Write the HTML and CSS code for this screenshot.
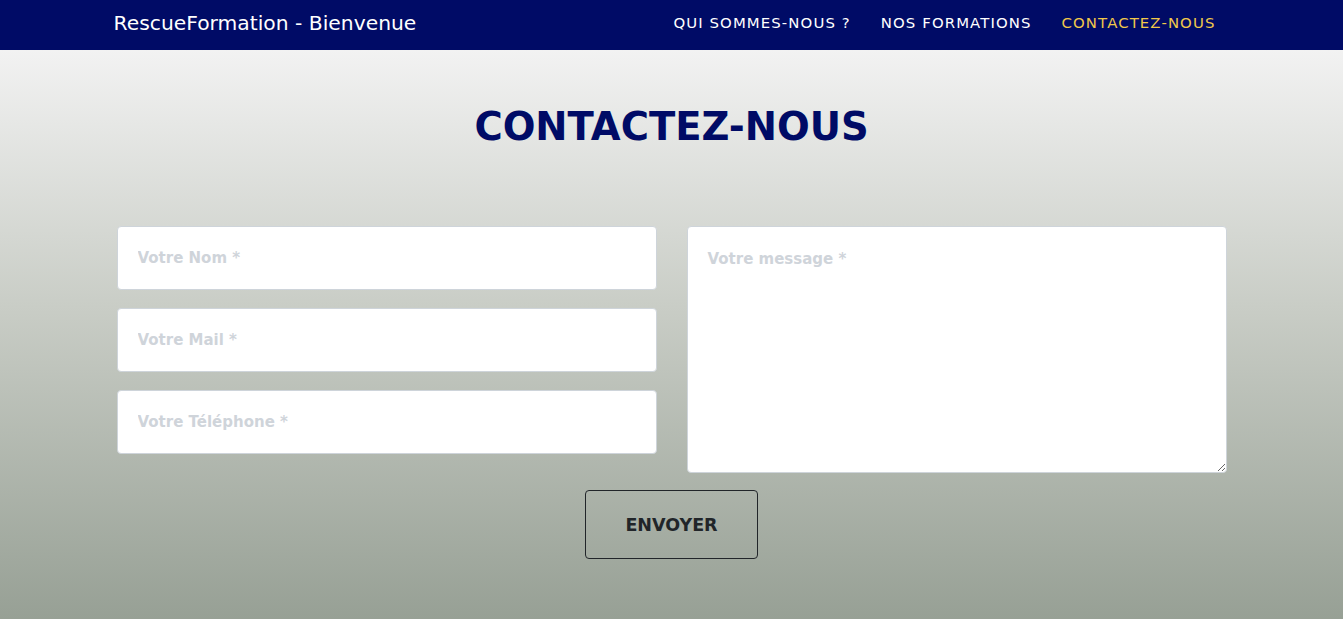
FILE: index.html
```html
<!DOCTYPE html>
<html lang="fr">
<head>
<meta charset="utf-8">
<title>RescueFormation - Contact</title>
<link rel="stylesheet" href="styles.css">
</head>
<body>
<header class="navbar">
  <div class="container nav-inner">
    <a class="brand" href="#">RescueFormation - Bienvenue</a>
    <nav class="nav-links">
      <a href="#">Qui sommes-nous ?</a>
      <a href="#">Nos formations</a>
      <a href="#" class="active">Contactez-nous</a>
    </nav>
  </div>
</header>
<main class="contact">
  <div class="container">
    <h1 class="title">Contactez-nous</h1>
    <form class="form">
      <div class="form-row">
        <div class="col col-fields">
          <input class="field" type="text" placeholder="Votre Nom *">
          <input class="field" type="email" placeholder="Votre Mail *">
          <input class="field" type="tel" placeholder="Votre Téléphone *">
        </div>
        <div class="col">
          <textarea class="field area" placeholder="Votre message *"></textarea>
        </div>
      </div>
      <div class="actions">
        <button class="btn" type="button">Envoyer</button>
      </div>
    </form>
  </div>
</main>
</body>
</html>
```

FILE: styles.css
```css
* { box-sizing: border-box; }
html, body { margin: 0; padding: 0; }
body {
  font-family: "DejaVu Sans", "Open Sans", sans-serif;
  background: #97a095;
}
.container {
  width: 1110px;
  margin: 0 auto;
}
.navbar {
  background: #000b66;
  height: 50px;
}
.nav-inner {
  height: 50px;
  display: flex;
  align-items: center;
  justify-content: space-between;
}
.brand {
  margin-left: -3px;
  color: #ffffff;
  text-decoration: none;
  font-size: 20.3px;
  margin-top: -4px;
}
.nav-links {
  display: flex;
  gap: 30px;
  margin-right: 11px;
  margin-top: -5px;
}
.nav-links a {
  color: #ffffff;
  text-decoration: none;
  text-transform: uppercase;
  font-size: 14.9px;
  letter-spacing: 1.1px;
}
.nav-links a.active { color: #f0c84a; }
.contact {
  min-height: 569px;
  background: linear-gradient(180deg, #f2f2f2 0%, #c9cdc6 45%, #97a095 100%);
  padding-top: 52px;
  padding-bottom: 60px;
}
.title {
  margin: 0;
  text-align: center;
  color: #000b66;
  font-size: 38.5px;
  font-weight: 700;
  text-transform: uppercase;
  line-height: 50px;
}
.form { margin-top: 74px; }
.form-row {
  display: flex;
  gap: 30px;
}
.col { flex: 1; display: flex; }
.col-fields {
  flex-direction: column;
  gap: 18px;
}
.field {
  width: 100%;
  height: 64px;
  border: 1px solid #ced4da;
  border-radius: 4px;
  background: #fff;
  padding: 0 20px;
  font-family: inherit;
  font-weight: 700;
  font-size: 15px;
  color: #495057;
}
.field::placeholder { color: #cfd4da; opacity: 1; }
.area {
  height: 247px;
  padding-top: 23px;
  resize: vertical;
}
.actions {
  display: flex;
  justify-content: center;
  margin-top: 17px;
}
.btn {
  width: 173px;
  height: 69px;
  border: 1px solid #212529;
  border-radius: 4px;
  background: transparent;
  color: #212529;
  font-family: inherit;
  font-weight: 700;
  font-size: 17.5px;
  text-transform: uppercase;
}
```
